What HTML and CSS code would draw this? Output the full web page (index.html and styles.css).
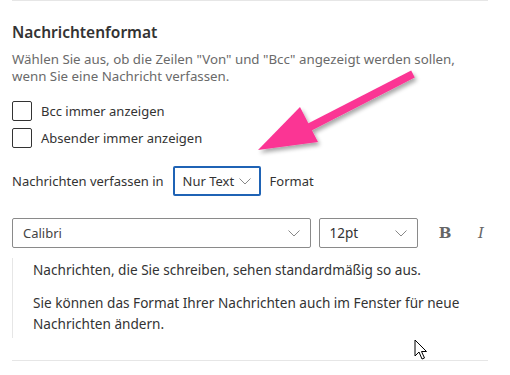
FILE: index.html
```html
<!DOCTYPE html>
<html lang="de">
<head>
<meta charset="utf-8">
<link rel="stylesheet" href="styles.css">
</head>
<body>
<div class="panel">
  <h2 class="title">Nachrichtenformat</h2>
  <p class="desc">Wählen Sie aus, ob die Zeilen "Von" und "Bcc" angezeigt werden sollen, wenn Sie eine Nachricht verfassen.</p>
  <div class="checks">
    <label class="check"><span class="box"></span><span>Bcc immer anzeigen</span></label>
    <label class="check"><span class="box"></span><span>Absender immer anzeigen</span></label>
  </div>
  <div class="compose">
    <span>Nachrichten verfassen in</span>
    <div class="select select-focus">
      <span>Nur Text</span>
      <svg class="chev" width="12" height="7" viewBox="0 0 12 7"><path d="M0.5 0.5 L6 6 L11.5 0.5" fill="none" stroke="#888" stroke-width="1"/></svg>
    </div>
    <span>Format</span>
  </div>
  <div class="fontrow">
    <div class="select font-name">
      <span>Calibri</span>
      <svg class="chev" width="12" height="7" viewBox="0 0 12 7"><path d="M0.5 0.5 L6 6 L11.5 0.5" fill="none" stroke="#888" stroke-width="1"/></svg>
    </div>
    <div class="select font-size">
      <span>12pt</span>
      <svg class="chev" width="12" height="7" viewBox="0 0 12 7"><path d="M0.5 0.5 L6 6 L11.5 0.5" fill="none" stroke="#888" stroke-width="1"/></svg>
    </div>
    <span class="fmt-btn bold">B</span>
    <span class="fmt-btn italic">I</span>
  </div>
  <div class="preview">
    <p>Nachrichten, die Sie schreiben, sehen standardmäßig so aus.</p>
    <p>Sie können das Format Ihrer Nachrichten auch im Fenster für neue Nachrichten ändern.</p>
  </div>
</div>
<svg class="arrow" width="510" height="375" viewBox="0 0 510 375">
  <defs>
    <filter id="sh" x="-20%" y="-20%" width="140%" height="140%">
      <feGaussianBlur in="SourceAlpha" stdDeviation="2"/>
      <feOffset dx="2" dy="3"/>
      <feComponentTransfer><feFuncA type="linear" slope="0.35"/></feComponentTransfer>
      <feMerge><feMergeNode/><feMergeNode in="SourceGraphic"/></feMerge>
    </filter>
  </defs>
  <g filter="url(#sh)">
    <path d="M413 74 L302 131" stroke="#fb3594" stroke-width="8" stroke-linecap="butt" fill="none"/>
    <path d="M258 150 L300 107 L318 142 Z" fill="#fb3594"/>
  </g>
</svg>
<svg class="cursor" width="14" height="22" viewBox="0 0 14 22">
  <path d="M1 1 L1 17 L5 13 L8 20 L10.5 19 L7.5 12.5 L12.5 12.5 Z" fill="#fff" stroke="#000" stroke-width="1" stroke-linejoin="miter"/>
</svg>
</body>
</html>
```
FILE: styles.css
```css
html, body {
  margin: 0;
  padding: 0;
  background: #fff;
}
body {
  font-family: "Noto Sans", "Open Sans", sans-serif;
  color: #333;
  position: relative;
  width: 510px;
  height: 375px;
  overflow: hidden;
}
.panel {
  margin: 0 22px 0 12px;
  border-top: 1px solid #e6e6e6;
  border-bottom: 1px solid #e6e6e6;
  height: 361px;
  box-sizing: border-box;
  padding-top: 19px;
}
.title {
  margin: 0;
  font-size: 15.5px;
  font-weight: 600;
  line-height: 24px;
  color: #333;
}
.desc {
  margin: 7px 0 0;
  max-width: 450px;
  font-size: 13.3px;
  line-height: 17px;
  color: #6a6a6a;
}
.checks {
  margin-top: 16px;
  display: flex;
  flex-direction: column;
  gap: 7px;
}
.check {
  display: flex;
  align-items: center;
  gap: 9px;
  font-size: 13px;
  line-height: 20px;
  color: #333;
}
.box {
  width: 20px;
  height: 20px;
  box-sizing: border-box;
  border: 1px solid #333;
  border-radius: 2px;
}
.compose {
  margin-top: 18px;
  display: flex;
  align-items: center;
  font-size: 13px;
  color: #333;
}
.select {
  height: 30px;
  box-sizing: border-box;
  border: 1px solid #8a8a8a;
  border-radius: 2px;
  display: flex;
  align-items: center;
  justify-content: space-between;
  padding: 0 10px 0 10px;
  font-size: 13px;
  color: #333;
}
.select-focus {
  border: 2px solid #1f63b5;
  width: 88px;
  margin: 0 9px 0 9px;
  padding: 0 8px 0 8px;
  font-size: 13px;
}
.fontrow {
  margin-top: 22px;
  display: flex;
  align-items: center;
}
.font-name {
  width: 300px;
  color: #444;
}
.font-size {
  width: 100px;
  margin-left: 8px;
  font-size: 13.5px;
}
.fmt-btn {
  font-family: "DejaVu Serif", serif;
  color: #666;
  font-size: 15px;
  width: 14px;
  text-align: center;
}
.bold {
  margin-left: 20px;
  font-weight: bold;
}
.italic {
  margin-left: 22px;
  font-style: italic;
}
.preview {
  margin-top: 10px;
  border-left: 1px solid #e6e6e6;
  padding: 1px 0 4px 20px;
  font-size: 13.6px;
  line-height: 21px;
  color: #333;
}
.preview p {
  margin: 0;
}
.preview p + p {
  margin-top: 12px;
}
.arrow {
  position: absolute;
  left: 0;
  top: 0;
  pointer-events: none;
}
.cursor {
  position: absolute;
  left: 414px;
  top: 339px;
}
```
